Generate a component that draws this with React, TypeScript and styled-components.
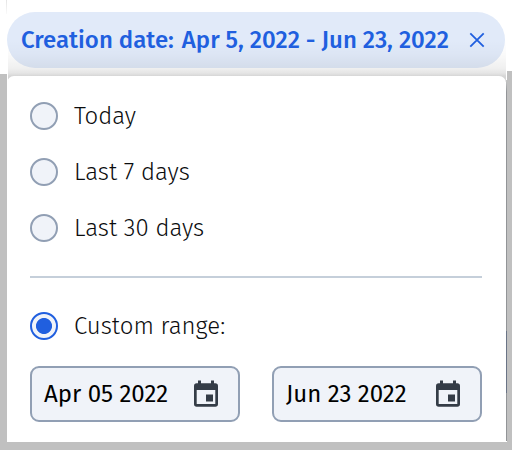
import React, { useState } from 'react';
import styled, { createGlobalStyle } from 'styled-components';

const GlobalStyle = createGlobalStyle`
  * { box-sizing: border-box; }
  body { margin: 0; background: #fff; }
`;

const Page = styled.main`
  width: 512px;
  height: 450px;
  overflow: hidden;
  padding: 12px 5px 8px 7px;
  color: #0b0c0e;
  font-family: 'Fira Sans', 'Noto Sans', sans-serif;
  background:
    linear-gradient(#e4e4e4, #fafafa) 6px 0 / 1px 14px no-repeat,
    linear-gradient(#6a7486, #6a7486) 506px 331px / 1px 62px no-repeat,
    linear-gradient(#c8c8c8, #929497 12px) 506px 80px / 1px 361px no-repeat,
    linear-gradient(#c0c0c0, #c0c0c0) 0 74px / 7px 376px no-repeat,
    linear-gradient(#c0c0c0, #c0c0c0) 507px 71px / 5px 379px no-repeat,
    linear-gradient(#c0c0c0, #c0c0c0) 0 442px / 512px 8px no-repeat,
    #fff;
`;

const Chip = styled.header`
  display: flex;
  align-items: center;
  width: 498px;
  height: 56px;
  padding: 0 20px 0 14px;
  border-radius: 28px;
  background: #e1eaf9;
  color: #205fdf;
`;

const Label = styled.span<{ $weight: number }>`
  font-size: 24px;
  font-weight: ${(p) => p.$weight};
  line-height: 32px;
  white-space: nowrap;
`;

const ChipValue = styled(Label)`
  margin-left: 8px;
`;

const ClearButton = styled.button`
  display: flex;
  margin-left: auto;
  padding: 0;
  border: 0;
  background: none;
  color: inherit;
`;

/* Fades the popup's shadow out over the chip and the gap below it. */
const ShadowBand = styled.div`
  width: 498px;
  height: 42px;
  margin: -28px 0 -6px 1px;
  background: linear-gradient(rgba(0, 0, 0, 0), rgba(0, 0, 0, 0.02) 14px, rgba(0, 0, 0, 0.06) 28px, rgba(0, 0, 0, 0.1) 33px, rgba(0, 0, 0, 0.16) 36px, rgba(0, 0, 0, 0.18));
`;

const Panel = styled.section`
  width: 499px;
  height: 366px;
  padding: 20px 23px;
  border-radius: 7px 7px 0 0;
  background: #fff;
`;

const Options = styled.div`
  display: flex;
  flex-direction: column;
  gap: 16px;
`;

const Option = styled.label`
  display: flex;
  align-items: center;
  gap: 16px;
  height: 40px;
`;

const Radio = styled.input`
  appearance: none;
  flex: none;
  width: 28px;
  height: 28px;
  margin: 0;
  border: 2px solid #919fb4;
  border-radius: 50%;
  background: #f0f3f9;
  &:checked {
    border-color: #205fdf;
    background: radial-gradient(circle, #205fdf 7.6px, #f0f3f9 8.4px);
  }
`;

const Divider = styled.hr`
  width: 452px;
  height: 2px;
  margin: 28px 0;
  border: 0;
  background: #c5cfda;
`;

const Dates = styled.div`
  display: flex;
  gap: 32px;
  margin-top: 20px;
`;

const DateField = styled.button`
  display: flex;
  align-items: center;
  justify-content: space-between;
  flex: none;
  width: 210px;
  height: 56px;
  padding: 0 18px 0 12px;
  border: 2px solid #919fb4;
  border-radius: 9px;
  background: #f0f3f9;
  color: #000;
  font-family: inherit;
`;

const CalendarIcon = () => (
  <svg width="28" height="28" viewBox="0 0 28 28">
    <path
      fill="#343c47"
      d="M6 .6h3v2.7h10V.6h3v2.7h1.3A2.7 2.7 0 0 1 26 6v18a2.7 2.7 0 0 1-2.7 2.7H4.7A2.7 2.7 0 0 1 2 24V6a2.7 2.7 0 0 1 2.7-2.7H6zM4.7 10v14h18.6V10zM14 14.6h7v7h-7z"
      fillRule="evenodd"
    />
  </svg>
);

const presets = [
  { id: 'today', label: 'Today' },
  { id: 'week', label: 'Last 7 days' },
  { id: 'month', label: 'Last 30 days' },
];

export default function App() {
  const [range, setRange] = useState('custom');
  return (
    <>
      <GlobalStyle />
      <Page>
        <Chip>
          <Label $weight={500}>Creation date:</Label>
          <ChipValue $weight={500}>Apr 5, 2022 - Jun 23, 2022</ChipValue>
          <ClearButton aria-label="Clear">
            <svg width="16" height="16" viewBox="0 0 16 16" fill="none" stroke="currentColor" strokeWidth="1.8">
              <path d="M1.3 1.3 14.7 14.7M14.7 1.3 1.3 14.7" />
            </svg>
          </ClearButton>
        </Chip>
        <ShadowBand />
        <Panel>
          <Options>
            {presets.map((p) => (
              <Option key={p.id}>
                <Radio type="radio" name="range" checked={range === p.id} onChange={() => setRange(p.id)} />
                <Label $weight={300}>{p.label}</Label>
              </Option>
            ))}
          </Options>
          <Divider />
          <Option>
            <Radio type="radio" name="range" checked={range === 'custom'} onChange={() => setRange('custom')} />
            <Label $weight={300}>Custom range:</Label>
          </Option>
          <Dates>
            <DateField>
              <Label $weight={400}>Apr 05 2022</Label>
              <CalendarIcon />
            </DateField>
            <DateField>
              <Label $weight={400}>Jun 23 2022</Label>
              <CalendarIcon />
            </DateField>
          </Dates>
        </Panel>
      </Page>
    </>
  );
}
